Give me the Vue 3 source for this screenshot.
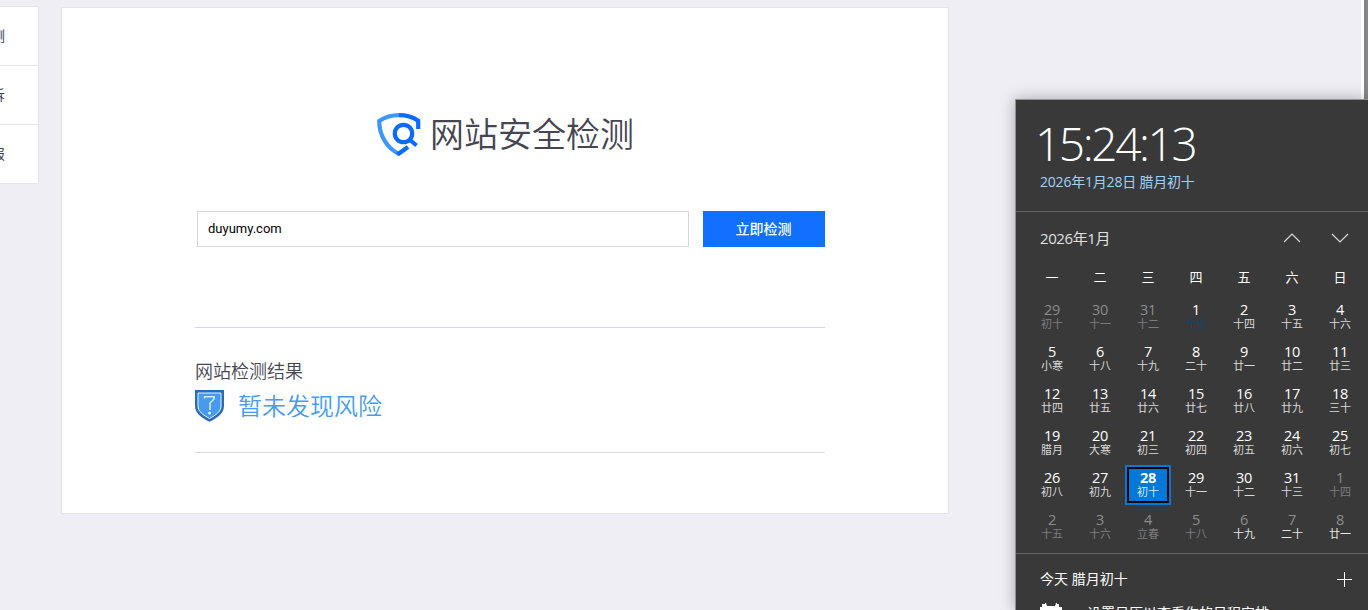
<script setup>
const navItems = ['安全检测', '网站申诉', '网址举报']

const weekdays = ['一', '二', '三', '四', '五', '六', '日']

const lunar = [
  '初十', '十一', '十二', '元旦', '十四', '十五', '十六',
  '小寒', '十八', '十九', '二十', '廿一', '廿二', '廿三',
  '廿四', '廿五', '廿六', '廿七', '廿八', '廿九', '三十',
  '腊月', '大寒', '初三', '初四', '初五', '初六', '初七',
  '初八', '初九', '初十', '十一', '十二', '十三', '十四',
  '十五', '十六', '立春', '十八', '十九', '二十', '廿一',
]

// The grid starts on Monday, December 29th
const days = lunar.map((text, i) => {
  let num = i - 2
  if (i < 3) num = 29 + i
  if (i > 33) num = i - 33
  return {
    num,
    text,
    muted: i < 3 || i > 33,
    bright: i > 38,
    holiday: i === 3,
    today: i === 30,
  }
})
</script>

<template>
  <div class="page">
    <nav class="side-nav">
      <div v-for="item in navItems" :key="item" class="side-item">{{ item }}</div>
    </nav>

    <main class="card">
      <h1 class="title">
        <svg class="logo" width="44" height="44" viewBox="0 0 44 44" fill="none">
          <path d="M22 2.2C15.5 2.200 8 4.200 2.200 8C2.400 22 9 34.500 22 41" stroke="#3e96ff" stroke-width="4.200" />
          <path d="M22 2.200C29 2.200 36 4.200 41.200 7.800V16" stroke="#0a6cff" stroke-width="4.200" />
          <path d="M20.500 41.500L31 34" stroke="#0a6cff" stroke-width="4.200" />
          <circle cx="26.500" cy="20.500" r="8.700" stroke="#0a6cff" stroke-width="4.200" />
          <path d="M32.500 26.500L39.500 32.500" stroke="#0a6cff" stroke-width="4.200" />
        </svg>
        <span>网站安全检测</span>
      </h1>

      <div class="search">
        <input class="search-input" type="text" value="duyumy.com" />
        <button class="search-btn">立即检测</button>
      </div>

      <section class="result">
        <div class="result-label">网站检测结果</div>
        <div class="result-status">
          <svg class="shield" width="30" height="33" viewBox="0 0 30 33" fill="none">
            <path d="M0 1H29V17C29 24 23 28.500 14.500 32.800C6 28.500 0 24 0 17Z" fill="#2b6cb5" />
            <path d="M3 4H26V17C26 22.500 21 26 14.500 29.500C8 26 3 22.500 3 17Z" fill="#469bec" stroke="#e6f3ff" />
            <path d="M9.500 9.500V7.800H19V10L15 14V21" stroke="#d9edff" stroke-width="1.500" />
            <circle cx="14.500" cy="24" r="1.500" fill="#d9edff" />
          </svg>
          <span>暂未发现风险</span>
        </div>
      </section>
    </main>

    <div class="scrollbar"></div>

    <aside class="flyout">
      <header class="clock">
        <div class="time">15:24:13</div>
        <div class="date">2026年1月28日 腊月初十</div>
      </header>

      <div class="calendar">
        <div class="month-bar">
          <span class="month">2026年1月</span>
          <svg class="arrow" width="18" height="10" viewBox="0 0 18 10">
            <path d="M1 9L9 1L17 9" />
          </svg>
          <svg class="arrow" width="18" height="10" viewBox="0 0 18 10">
            <path d="M1 1L9 9L17 1" />
          </svg>
        </div>
        <div class="weekdays">
          <span v-for="w in weekdays" :key="w">{{ w }}</span>
        </div>
        <div class="days">
          <div
            v-for="(day, i) in days"
            :key="i"
            class="day"
            :class="{ muted: day.muted, bright: day.bright, holiday: day.holiday, today: day.today }"
          >
            <span class="num">{{ day.num }}</span>
            <span class="lunar">{{ day.text }}</span>
          </div>
        </div>
      </div>

      <div class="agenda">
        <div class="agenda-head">
          <span>今天 腊月初十</span>
          <svg width="15" height="15" viewBox="0 0 15 15">
            <path d="M7.500 0V15M0 7.500H15" stroke="#fff" />
          </svg>
        </div>
        <div class="agenda-tip">
          <svg width="22" height="22" viewBox="0 0 22 22" fill="#fff">
            <path d="M0 4H2V1H5V0H6L7 3H15L16 0H17V1H19V4H22V22H0Z" />
          </svg>
          <span>设置日历以查看你的日程安排</span>
        </div>
      </div>
    </aside>
  </div>
</template>

<style>
body {
  overflow: hidden;
}
</style>

<style scoped>
.page {
  position: relative;
  display: flex;
  align-items: flex-start;
  box-sizing: border-box;
  height: 610px;
  overflow: hidden;
  background: #eeeef4;
  font-family: "Liberation Sans", "Noto Sans CJK SC", sans-serif;
}

.side-nav {
  width: 39px;
  margin-top: 6px;
  box-sizing: border-box;
  border: 1px solid #e4e4ea;
  border-left: 0;
  background: #fff;
  overflow: hidden;
}

.side-item {
  display: flex;
  justify-content: flex-end;
  height: 58px;
  padding-right: 33px;
  line-height: 58px;
  font-size: 14px;
  color: #40404c;
  white-space: nowrap;
}

.side-item + .side-item {
  border-top: 1px solid #e4e4ea;
}

.card {
  box-sizing: border-box;
  width: 888px;
  height: 507px;
  margin: 7px 0 0 22px;
  padding: 103px 123px 0 133px;
  border: 1px solid #e4e4ea;
  background: #fff;
}

.title {
  display: flex;
  align-items: center;
  justify-content: center;
  gap: 9px;
  height: 48px;
  margin: 0;
  padding-right: 9px;
  font-size: 34px;
  font-weight: 350;
  line-height: 48px;
  color: #464652;
  white-space: nowrap;
}

.search {
  display: flex;
  gap: 14px;
  height: 36px;
  margin: 52px 0 0 2px;
}

.search-input {
  box-sizing: border-box;
  width: 492px;
  padding: 0 10px 2px;
  border: 1px solid #d6d6dd;
  font-family: Roboto, sans-serif;
  font-size: 13px;
  color: #000;
  outline: none;
}

.search-btn {
  width: 122px;
  padding: 0 1px 2px 0;
  border: 0;
  background: #1170ff;
  font-family: "Noto Sans CJK SC", sans-serif;
  font-size: 14px;
  font-weight: 500;
  color: #fff;
}

.result {
  box-sizing: border-box;
  width: 630px;
  height: 126px;
  margin-top: 80px;
  padding-top: 29px;
  border-top: 1px solid #d8d8de;
  border-bottom: 1px solid #d8d8de;
}

.result-label {
  height: 30px;
  line-height: 30px;
  font-size: 18px;
  font-weight: 350;
  color: #464652;
}

.result-status {
  display: flex;
  align-items: center;
  gap: 13px;
  height: 40px;
  font-size: 24px;
  font-weight: 350;
  line-height: 40px;
  color: #489bed;
}

.shield {
  margin-bottom: 4px;
}

.scrollbar {
  box-sizing: border-box;
  width: 7px;
  height: 610px;
  margin-left: auto;
  border-left: 3px solid #fff;
  background: #868686;
}

/* Taskbar clock flyout */
.flyout {
  position: absolute;
  top: 99px;
  left: 1015px;
  width: 353px;
  height: 511px;
  box-sizing: border-box;
  border: 1px solid #929294;
  border-right: 0;
  border-bottom: 0;
  overflow: hidden;
  background: #39393a;
  box-shadow: 0 0 14px rgba(0, 0, 0, 0.3);
  font-family: "Open Sans", "Noto Sans CJK SC", sans-serif;
  color: #fff;
}

.clock {
  box-sizing: border-box;
  height: 112px;
  padding: 15px 0 0 24px;
  border-bottom: 1px solid #646466;
}

.time {
  height: 56px;
  margin-left: -5px;
  font-size: 46px;
  font-weight: 300;
  line-height: 56px;
  letter-spacing: -2.4px;
}

.date {
  height: 22px;
  line-height: 22px;
  font-size: 14px;
  letter-spacing: -0.2px;
  color: #9fd2fb;
  white-space: nowrap;
}

.calendar {
  box-sizing: border-box;
  height: 342px;
  padding-left: 12px;
  border-bottom: 1px solid #646466;
}

.month-bar {
  display: flex;
  align-items: center;
  height: 52px;
  padding: 0 19px 0 12px;
}

.month {
  margin: 0 auto 2px 0;
  font-size: 15px;
  letter-spacing: -0.4px;
  color: #e0e0e0;
}

.arrow {
  margin-left: 30px;
  fill: none;
  stroke: #d8d8d8;
  stroke-width: 1.2;
}

.weekdays {
  display: grid;
  grid-template-columns: repeat(7, 48px);
  height: 32px;
  line-height: 26px;
  font-size: 13px;
  text-align: center;
}

.days {
  display: grid;
  grid-template-columns: repeat(7, 48px);
  grid-auto-rows: 42px;
}

.day {
  display: flex;
  flex-direction: column;
  align-items: center;
  box-sizing: border-box;
  width: 46px;
  height: 40px;
  margin: 1px;
  padding-top: 5px;
}

.num {
  height: 15px;
  line-height: 15px;
  font-size: 14.5px;
  letter-spacing: -0.3px;
}

.lunar {
  height: 14px;
  line-height: 14px;
  font-size: 11px;
  color: #d9d9d9;
}

.muted .num {
  color: #8c8c8d;
}

.muted .lunar {
  color: #7d7d7e;
}

.bright .lunar {
  color: #e6e6e6;
}

.holiday .lunar {
  color: #15426b;
}

.today {
  padding-top: 1px;
  border: 2px solid #0078d7;
  outline: 2px solid #000;
  outline-offset: -4px;
  background: #0078d7;
}

.today .num {
  padding-top: 2px;
  font-weight: 700;
}

.today .lunar {
  color: #d5e9fa;
}

.agenda-head {
  display: flex;
  align-items: center;
  justify-content: space-between;
  height: 50px;
  padding: 0 16px 0 24px;
  font-size: 14px;
}

.agenda-head span {
  margin-bottom: 2px;
}

.agenda-tip {
  display: flex;
  align-items: flex-start;
  gap: 25px;
  margin-top: -1px;
  padding-left: 24px;
  font-size: 14px;
  line-height: 20px;
  white-space: nowrap;
}
</style>
